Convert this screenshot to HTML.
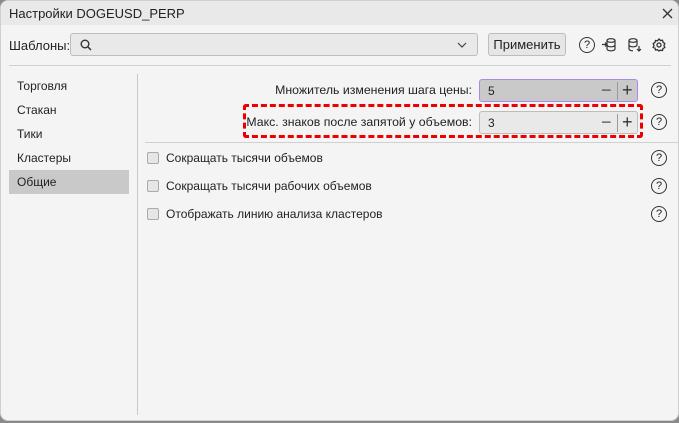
<!DOCTYPE html><html><head><style>
*{box-sizing:border-box;margin:0;padding:0}
body{width:679px;height:423px;background:#8a8a8a;font-family:"Liberation Sans",sans-serif;font-size:12px;color:#222;position:relative;overflow:hidden}
.win{position:absolute;left:0;top:0;width:679px;height:421px;background:#f4f4f4;border-radius:8px;overflow:hidden;border:1px solid #cfcfcf}
.tb{position:absolute;left:0;top:0;width:100%;height:24px;background:#e9e9e9}
.a{position:absolute;white-space:nowrap}
.inp{position:absolute;border:1px solid #bdbdbd;border-radius:3px;background:#e9e9e9}
.q{position:absolute;width:16px;height:16px;border:1.3px solid #333;border-radius:50%;font-size:11px;text-align:center;line-height:14px}
.cb{position:absolute;left:146px;width:12px;height:12px;border:1px solid #aaa;border-radius:2px;background:#e6e6e6}
.pm{position:absolute;top:1px;font-size:18px;line-height:18px}
</style></head><body><div class="win">
<div class="tb"></div>
<div class="a" style="left:8px;top:5px;font-size:13px">Настройки DOGEUSD_PERP</div>
<svg class="a" style="left:661px;top:7px" width="11" height="11"><path d="M1 1l9 9M10 1l-9 9" stroke="#333" stroke-width="1.3"/></svg>
<div class="a" style="left:8px;top:37px;font-size:13px">Шаблоны:</div>
<div class="inp" style="left:69px;top:32px;width:408px;height:23px">
<svg style="position:absolute;left:9px;top:5px" width="12" height="12"><circle cx="5" cy="5" r="3.8" fill="none" stroke="#333" stroke-width="1.4"/><path d="M8 8l3 3" stroke="#333" stroke-width="1.5"/></svg>
<svg style="position:absolute;left:386px;top:8px" width="10" height="6"><path d="M1 1l4 4 4-4" fill="none" stroke="#444" stroke-width="1.2"/></svg></div>
<div class="inp" style="left:487px;top:32px;width:78px;height:23px;background:#e6e6e6;text-align:center;line-height:21px;font-size:13px">Применить</div>
<div class="q" style="left:578px;top:36px">?</div>
<svg class="a" style="left:600px;top:36px" width="16" height="16" fill="none" stroke="#333" stroke-width="1.2"><ellipse cx="10" cy="3.5" rx="4" ry="1.8"/><path d="M6 3.5v8.5c0 1 1.8 1.8 4 1.8s4-.8 4-1.8V3.5M6 8c0 1 1.8 1.8 4 1.8s4-.8 4-1.8M1 7.5h5M4 5.5l2 2-2 2"/></svg>
<svg class="a" style="left:626px;top:36px" width="16" height="16" fill="none" stroke="#333" stroke-width="1.2"><ellipse cx="6" cy="3.5" rx="4" ry="1.8"/><path d="M2 3.5v8.5c0 1 1.8 1.8 4 1.8M10 3.5v5M2 8c0 1 1.8 1.8 4 1.8s4-.8 4-1.8M12 9v5M10 12l2 2 2-2"/></svg>
<svg class="a" style="left:651px;top:37px" width="14" height="14" fill="none" stroke="#333" stroke-width="1.3"><path d="M7 1l1.5 1.5 2-.3.5 2L12.8 5.5 12 7.5l.8 2-1.8 1-.5 2-2-.3L7 13l-1.5-1.3-2 .3-.5-2L1.2 9.5 2 7.5l-.8-2 1.8-1 .5-2 2 .3z"/><circle cx="7" cy="7" r="2"/></svg>
<div class="a" style="left:8px;top:64px;width:662px;height:1px;background:#d0d0d0"></div>
<div class="a" style="left:16px;top:78px">Торговля</div>
<div class="a" style="left:16px;top:102px">Стакан</div>
<div class="a" style="left:16px;top:126px">Тики</div>
<div class="a" style="left:16px;top:150px">Кластеры</div>
<div class="a" style="left:8px;top:169px;width:120px;height:24px;background:#c9c9c9"></div>
<div class="a" style="left:16px;top:174px">Общие</div>
<div class="a" style="left:136px;top:73px;width:1px;height:341px;background:#c8c8c8"></div>
<div class="a" style="right:206px;top:82px;font-size:12.3px">Множитель изменения шага цены:</div>
<div class="inp" style="left:478px;top:78px;width:159px;height:23px;background:#c9c9c9;border-color:#a98be6"><span class="a" style="left:8px;top:4px">5</span><span class="pm" style="left:121px;color:#555">−</span><span class="a" style="left:137px;top:2px;width:1px;height:18px;background:#999"></span><span class="pm" style="left:142px;color:#333">+</span></div>
<div class="a" style="right:206px;top:114px;font-size:12.3px">Макс. знаков после запятой у объемов:</div>
<div class="inp" style="left:478px;top:110px;width:159px;height:23px;background:#e9e9e9"><span class="a" style="left:8px;top:4px">3</span><span class="pm" style="left:121px;color:#555">−</span><span class="a" style="left:137px;top:2px;width:1px;height:18px;background:#999"></span><span class="pm" style="left:142px;color:#333">+</span></div>
<div class="a" style="left:242px;top:103px;width:400px;height:34px;border:3px dashed #ee0000;border-radius:3px"></div>
<div class="q" style="left:650px;top:81px">?</div>
<div class="q" style="left:650px;top:113px">?</div>
<div class="a" style="left:144px;top:141px;width:535px;height:1px;background:#d0d0d0"></div>
<div class="cb" style="top:151px"></div><div class="a" style="left:165px;top:150px">Сокращать тысячи объемов</div><div class="q" style="left:650px;top:149px">?</div>
<div class="cb" style="top:179px"></div><div class="a" style="left:165px;top:178px">Сокращать тысячи рабочих объемов</div><div class="q" style="left:650px;top:177px">?</div>
<div class="cb" style="top:207px"></div><div class="a" style="left:165px;top:206px">Отображать линию анализа кластеров</div><div class="q" style="left:650px;top:205px">?</div>
</div></body></html>
